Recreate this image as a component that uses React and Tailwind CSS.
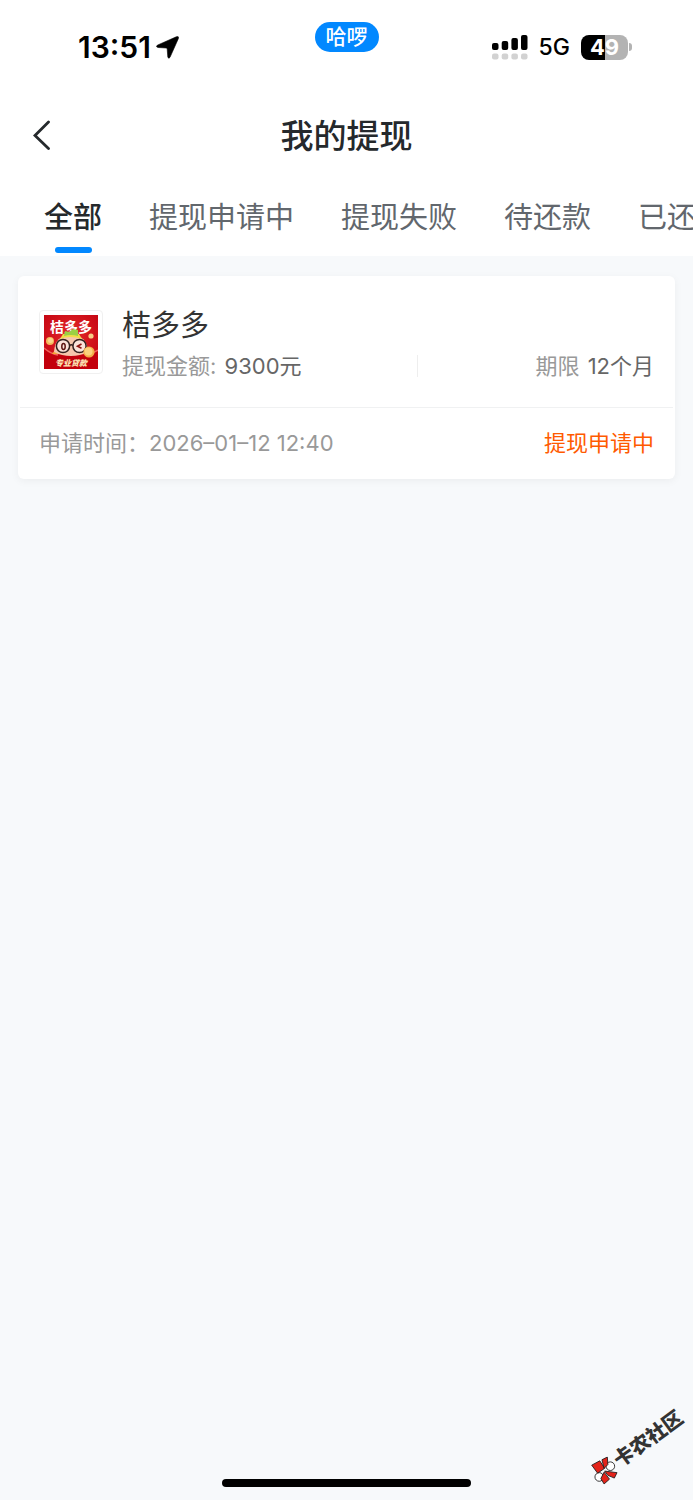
const tabs = ['全部', '提现申请中', '提现失败', '待还款', '已还款'];

function StatusBar() {
  return (
    <div className="grid h-[91px] grid-cols-3 items-start text-black">
      <div className="flex items-center gap-[5px] pt-[29px] pl-[78px]">
        <span className="text-[30px] leading-[36px] font-semibold">13:51</span>
        <svg className="h-[23px] w-[23px] shrink-0" viewBox="0 0 23 23" aria-hidden="true">
          <path
            d="M1.300 9.200 20.300.8Q23.400 0 22.300 2.700L14 21.300Q12.600 23.400 11.800 21L11.200 13Q11.100 12.100 10.200 12L2 11.500Q-.6 10.900 1.300 9.200Z"
            fill="black"
            stroke="black"
            strokeWidth="0.600"
          />
        </svg>
      </div>
      <div className="flex justify-center pt-[22px]">
        <span className="rounded-full bg-[#0288ff] px-[11px] text-[21px] leading-[30px] font-medium text-white">哈啰</span>
      </div>
      <div className="flex items-center justify-end gap-[11px] pt-[29px] pr-[61px]">
        <svg className="h-[25px] w-9" viewBox="0 0 36 25" aria-hidden="true">
          <g fill="black">
            <rect x="0" y="8" width="6.500" height="7" rx="2" />
            <rect x="9.700" y="6" width="6.500" height="9" rx="2" />
            <rect x="19.400" y="3" width="6.500" height="12" rx="2" />
            <rect x="29" y="0" width="6.500" height="15" rx="2" />
          </g>
          <g fill="#d2d2d2">
            <rect x="0" y="18.500" width="6.500" height="6" rx="2" />
            <rect x="9.700" y="18.500" width="6.500" height="6" rx="2" />
            <rect x="19.400" y="18.500" width="6.500" height="6" rx="2" />
            <rect x="29" y="18.500" width="6.500" height="6" rx="2" />
          </g>
        </svg>
        <span className="text-[23px] leading-[36px] font-medium">5G</span>
        <div className="flex items-center gap-px">
          <span className="h-[25px] w-[47px] rounded-lg bg-linear-to-r from-black from-50% to-[#b3b3b3] to-50% text-center text-[22px] leading-[25px] font-bold text-white">
            49
          </span>
          <span className="h-2 w-[3px] rounded-r-full bg-[#b3b3b3]" />
        </div>
      </div>
    </div>
  );
}

function ProductLogo() {
  return (
    <svg className="h-[54px] w-[54px]" viewBox="0 0 54 54" role="img" aria-label="桔多多">
      <defs>
        <radialGradient id="red" cx="50%" cy="40%" r="65%">
          <stop offset="0" stopColor="#e52a2c" />
          <stop offset="1" stopColor="#c50512" />
        </radialGradient>
      </defs>
      <rect width="54" height="54" fill="url(#red)" />
      <text x="27" y="17" textAnchor="middle" fontSize="14" fontWeight="700" fill="white">桔多多</text>
      <path d="M0 33q6 6 14 7h27q8-1 13-5v19H0Z" fill="#c3000c" />
      <path d="M0 33q7 6 14 7M54 35q-6 4-13 5" stroke="#f0605a" strokeWidth="1.500" fill="none" />
      <path d="m8 39 6-8 3 8Z" fill="#f4a535" />
      <path d="M10 37q1-17 17-17t17 17q-8 4-17 4t-17-4Z" fill="#f6c6ac" />
      <path d="M16 24q10-4 22 0l-3-5H19Z" fill="#f0dd48" />
      <path d="m20 21 1-5 4 1 4-3 5 1v6q-7-2-14 0Z" fill="#9bd044" />
      <circle cx="19" cy="31" r="6.600" fill="#fbe3da" stroke="#34201f" strokeWidth="1.500" />
      <circle cx="35.500" cy="31" r="6.600" fill="#fbe3da" stroke="#34201f" strokeWidth="1.500" />
      <path d="M25.500 30.500q1.800-1.500 3.500 0" stroke="#34201f" strokeWidth="1.500" fill="none" />
      <ellipse cx="19.500" cy="31.500" rx="1.700" ry="3" fill="none" stroke="#5c1512" strokeWidth="1.500" />
      <path d="m37.500 29-4 2.300 4 2" fill="none" stroke="#8c1512" strokeWidth="1.600" />
      <circle cx="6" cy="26" r="4" fill="#f5b95c" />
      <circle cx="6.500" cy="25.500" r="2.500" fill="#fbd48a" />
      <circle cx="47" cy="21" r="2.600" fill="#f8cc86" />
      <circle cx="45" cy="37" r="5.600" fill="#f3ac48" />
      <circle cx="44.500" cy="36.500" r="4" fill="#fbd07c" />
      <text x="27" y="50.500" textAnchor="middle" fontSize="8" fontWeight="900" fontStyle="italic" fill="#fbe3b4">专业贷款</text>
    </svg>
  );
}

function RecordCard() {
  return (
    <article className="mx-[18px] mt-5 rounded-md bg-white px-0.5 pt-[30px] shadow-[0_2px_8px_rgba(0,0,0,0.05)]">
      <div className="flex items-start gap-[19px] border-b border-[#f0f1f2] px-[19px] pb-[23px]">
        <div className="mt-1 shrink-0 rounded border border-[#f0f0f0] p-1">
          <ProductLogo />
        </div>
        <div className="flex-1">
          <h2 className="text-[29px] leading-[40px] font-[380] text-[#333333]">桔多多</h2>
          <div className="flex items-center justify-between pt-1 pb-0.5 text-[22px] leading-[32px] font-[380] text-[#999999]">
            <p className="flex-5">
              提现金额: <span className="ml-0.5 text-[#666666]">9300元</span>
            </p>
            <span className="h-[22px] w-px bg-[#eeeeee]" />
            <p className="flex-4 text-right">
              期限 <span className="ml-0.5 text-[#666666]">12个月</span>
            </p>
          </div>
        </div>
      </div>
      <div className="flex h-[71px] items-center justify-between px-[19px] text-[22px] font-[380]">
        <p className="text-[#999999]">申请时间：2026–01–12 12:40</p>
        <p className="text-[#ff5a00]">提现申请中</p>
      </div>
    </article>
  );
}

function Watermark() {
  return (
    <div className="absolute right-0 bottom-[39px] flex w-[112px] -rotate-36 items-center justify-center">
      <svg className="h-[28px] w-[28px] rotate-36" viewBox="0 0 26 26" aria-hidden="true">
        <g stroke="#1c1c1c" strokeWidth="0.800">
          <circle cx="18.300" cy="9" r="4" fill="white" />
          <circle cx="8" cy="19" r="4" fill="white" />
          <path d="m1 8 7.500-4 4.500 7-6.500 4.500Z" fill="#e2231a" />
          <path d="m10.500 3 5-2.500.5 7-3.500 3.500Z" fill="#e2231a" />
          <path d="m13 13.500 11.500 1.500-2.500 5-6-2.500Z" fill="#e2231a" />
          <path d="m12.500 14.500 5 6.500-5 4.500-3-5Z" fill="#e2231a" />
        </g>
      </svg>
      <span className="text-[20px] leading-6 font-black text-[#333333]">卡农社区</span>
    </div>
  );
}

export default function App() {
  return (
    <div className="relative flex min-h-screen flex-col overflow-hidden bg-[#f7f9fb] font-['Inter','Noto_Sans_CJK_SC',sans-serif]">
      <header className="bg-white">
        <StatusBar />
        <div className="grid h-[88px] grid-cols-[1fr_auto_1fr] items-center">
          <button type="button" aria-label="返回" className="ml-8 w-5">
            <svg className="h-[30px] w-5" viewBox="0 0 20 30" aria-hidden="true">
              <path d="M16.500 2 3 15.500 16.500 28.500" fill="none" stroke="#25292c" strokeWidth="2.800" strokeLinecap="round" />
            </svg>
          </button>
          <h1 className="pt-0.5 text-[33px] leading-[48px] font-medium text-[#25292c]">我的提现</h1>
        </div>
        <nav className="flex h-[77px] gap-[47px] overflow-hidden pl-11 text-[29px] leading-[42px] whitespace-nowrap">
          {tabs.map((tab, i) => (
            <button
              key={tab}
              type="button"
              className={
                i === 0
                  ? 'flex shrink-0 flex-col items-center gap-2 pt-[18px] font-medium text-[#25292c]'
                  : 'flex shrink-0 flex-col items-center pt-[18px] font-[380] text-[#62676d]'
              }
            >
              {tab}
              {i === 0 && <span className="h-1.5 w-[37px] rounded-full bg-[#0288ff]" />}
            </button>
          ))}
        </nav>
      </header>
      <main className="flex-1">
        <RecordCard />
      </main>
      <Watermark />
      <div className="mx-auto mb-[13px] h-2 w-[249px] rounded-full bg-black" />
    </div>
  );
}
